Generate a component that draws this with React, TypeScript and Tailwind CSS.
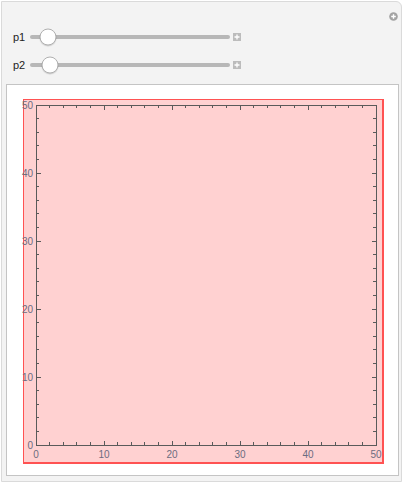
const X0 = 12;
const Y0 = 345;
const SCALE = 6.8;

const sx = (v: number) => X0 + v * SCALE;
const sy = (v: number) => Y0 - v * SCALE;

const ticks = Array.from({ length: 26 }, (_, i) => i * 2);
const labels = [0, 10, 20, 30, 40, 50];

const Slider = ({ label, pos }: { label: string; pos: number }) => {
  return (
    <div className="flex items-center h-[16px] pl-[11px]">
      <span className="w-[17px] text-[11px] text-[#222] leading-none">{label}</span>
      <div className="relative w-[200px] h-[4px] rounded-full bg-[#b7b7b7]">
        <div
          className="absolute top-1/2 -translate-y-1/2 -translate-x-1/2 w-[17px] h-[17px] rounded-full bg-white border border-[#b0b0b0] shadow-[0_1px_1px_rgba(0,0,0,0.15)]"
          style={{ left: pos }}
        />
      </div>
      <div className="ml-[3px] w-[8px] h-[8px] bg-[#bcbcbc] flex items-center justify-center">
        <svg width="6" height="6" viewBox="0 0 6 6">
          <path d="M3 0.5v5M0.5 3h5" stroke="white" strokeWidth="1.3" />
        </svg>
      </div>
    </div>
  );
};

const Plot = () => {
  return (
    <svg width="358" height="362" className="block overflow-visible">
      <g stroke="#5a5a5a" strokeWidth="1" shapeRendering="crispEdges">
        <rect x={X0} y={sy(50)} width={50 * SCALE} height={50 * SCALE} fill="none" />
        {ticks.map((t) => {
          const len = t % 10 === 0 ? 4.5 : 2.8;
          return (
            <g key={t}>
              <line x1={sx(t)} y1={Y0} x2={sx(t)} y2={Y0 - len} />
              <line x1={sx(t)} y1={sy(50)} x2={sx(t)} y2={sy(50) + len} />
              <line x1={X0} y1={sy(t)} x2={X0 + len} y2={sy(t)} />
              <line x1={sx(50)} y1={sy(t)} x2={sx(50) - len} y2={sy(t)} />
            </g>
          );
        })}
      </g>
      <g fill="#6c6c80" fontSize="10" fontFamily="'Liberation Sans', Arial, sans-serif">
        {labels.map((l) => (
          <text key={"y" + l} x={X0 - 3} y={sy(l) + 3.5} textAnchor="end">
            {l}
          </text>
        ))}
        {labels.map((l) => (
          <text key={"x" + l} x={sx(l)} y={Y0 + 13} textAnchor="middle">
            {l}
          </text>
        ))}
      </g>
    </svg>
  );
};

export default function App() {
  return (
    <div className="w-[405px] h-[484px] bg-white pt-[1px] pl-[1px] font-['Liberation_Sans',Arial,sans-serif]">
      <div className="w-[401px] h-[481px] border border-[#dadada] rounded-tr-[6px] bg-[#f3f3f3] flex flex-col">
        <div className="flex justify-end pr-[3px] mt-[10px] h-[9px]">
          <svg width="9" height="9" viewBox="0 0 9 9">
            <circle cx="4.5" cy="4.5" r="4.3" fill="#a3a3a3" />
            <path d="M4.5 2.2v4.6M2.2 4.5h4.6" stroke="white" strokeWidth="1.4" />
          </svg>
        </div>
        <div className="mt-[8px] flex flex-col gap-[12px]">
          <Slider label="p1" pos={18} />
          <Slider label="p2" pos={20} />
        </div>
        <div className="mt-[11px] ml-[4px] w-[393px] h-[392px] border border-[#c4c4c4] bg-white pt-[14px] pl-[16px]">
          <div className="w-[361px] h-[365px] bg-[#ffd1d1] border-l border-t border-r-2 border-b-2 border-[#ff5252]">
            <Plot />
          </div>
        </div>
      </div>
    </div>
  );
}
